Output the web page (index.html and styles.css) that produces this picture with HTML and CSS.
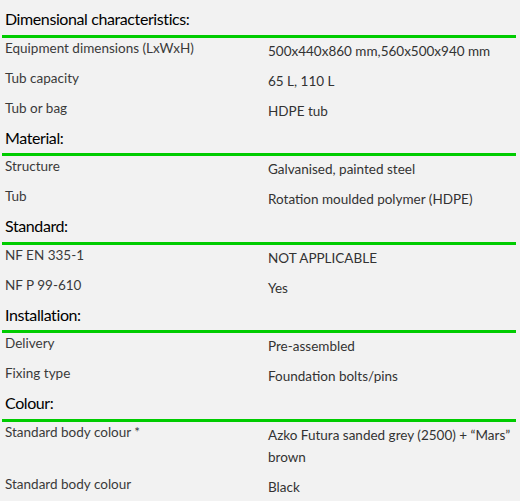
FILE: index.html
```html
<!DOCTYPE html>
<html>
<head>
<meta charset="utf-8">
<link rel="stylesheet" href="styles.css">
</head>
<body>
<div class="specs">
  <div class="section">Dimensional characteristics:</div>
  <div class="row"><div class="label">Equipment dimensions (LxWxH)</div><div class="value">500x440x860 mm,560x500x940 mm</div></div>
  <div class="row"><div class="label">Tub capacity</div><div class="value">65 L, 110 L</div></div>
  <div class="row"><div class="label">Tub or bag</div><div class="value">HDPE tub</div></div>

  <div class="section">Material:</div>
  <div class="row"><div class="label">Structure</div><div class="value">Galvanised, painted steel</div></div>
  <div class="row"><div class="label">Tub</div><div class="value">Rotation moulded polymer (HDPE)</div></div>

  <div class="section">Standard:</div>
  <div class="row"><div class="label">NF EN 335-1</div><div class="value">NOT APPLICABLE</div></div>
  <div class="row"><div class="label">NF P 99-610</div><div class="value">Yes</div></div>

  <div class="section">Installation:</div>
  <div class="row"><div class="label">Delivery</div><div class="value">Pre-assembled</div></div>
  <div class="row"><div class="label">Fixing type</div><div class="value">Foundation bolts/pins</div></div>

  <div class="section">Colour:</div>
  <div class="row"><div class="label">Standard body colour *</div><div class="value">Azko Futura sanded grey (2500) + “Mars” brown</div></div>
  <div class="row"><div class="label">Standard body colour</div><div class="value">Black</div></div>
</div>
</body>
</html>
```

FILE: styles.css
```css
html, body {
  margin: 0;
  padding: 0;
  background: #f2f2f2;
}
body {
  font-family: Lato, "Open Sans", sans-serif;
  color: #333;
}
.specs {
  margin: 9px 4px 0 2px;
}
.section {
  font-size: 16px;
  line-height: 20px;
  height: 25.5px;
  box-sizing: content-box;
  padding: 0 0 0 3px;
  color: #000;
  border-bottom: 3px solid #00cc00;
  letter-spacing: -0.4px;
}
.row {
  display: grid;
  grid-template-columns: 266px 1fr;
}
.label {
  font-size: 13.5px;
  line-height: 20px;
  padding: 0 0 0 3px;
  color: #3a3a3a;
}
.value {
  font-size: 13.5px;
  line-height: 22px;
  padding: 2px 0 6px 0;
}
```
